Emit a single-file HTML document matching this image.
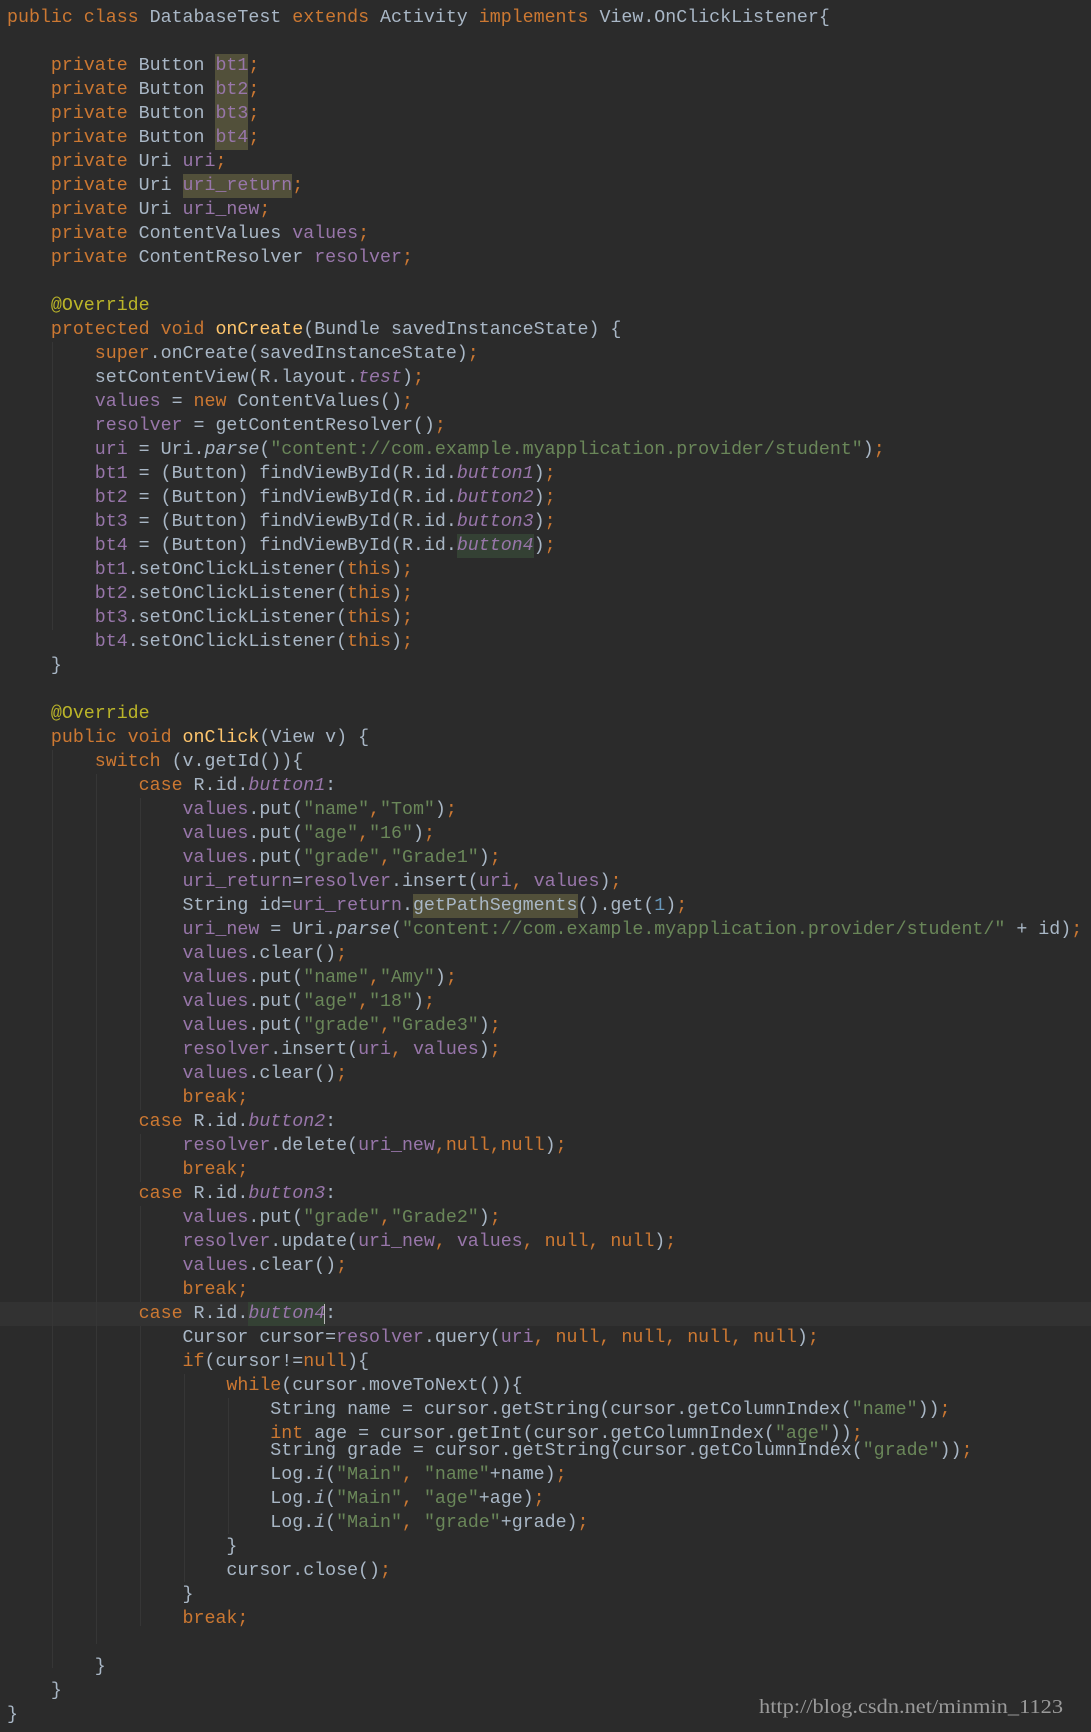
<!DOCTYPE html>
<html><head><meta charset="utf-8"><style>
html,body{margin:0;padding:0}
body{width:1091px;height:1732px;background:#2b2b2b;overflow:hidden;position:relative;font-family:"Liberation Mono","DejaVu Sans Mono",monospace;font-size:18.3px;color:#a9b7c6}
#code{position:absolute;left:7px;top:6px}
.l{height:24px;line-height:24px;white-space:pre}
.k{color:#cc7832}.f{color:#9876aa}.s{color:#6a8759}.m{color:#ffc66d}.a{color:#bbb529}.n{color:#6897bb}
.i{font-style:italic}
.h{background:#52503a;display:inline-block;height:24px}
.g{background:#344134;display:inline-block;height:24px}
.cur{position:absolute;left:0;width:1091px;height:24px;background:#323232}
.gd{position:absolute;width:1px;background:#363636}
#wm{position:absolute;left:759px;top:1696px;font-family:"Liberation Serif",serif;font-size:20px;color:#9a9a9a;transform:scaleX(1.12);transform-origin:left top;white-space:nowrap}
</style></head><body>
<div class="cur" style="top:1302px"></div>
<div class="gd" style="left:52px;top:342px;height:288px"></div>
<div class="gd" style="left:52px;top:750px;height:918px"></div>
<div class="gd" style="left:96px;top:774px;height:870px"></div>
<div class="gd" style="left:140px;top:798px;height:312px"></div>
<div class="gd" style="left:140px;top:1134px;height:48px"></div>
<div class="gd" style="left:140px;top:1206px;height:96px"></div>
<div class="gd" style="left:140px;top:1326px;height:300px"></div>
<div class="gd" style="left:184px;top:1374px;height:208px"></div>
<div class="gd" style="left:228px;top:1398px;height:136px"></div>
<div id="code">
<div class="l"><span class="k">public class </span>DatabaseTest <span class="k">extends </span>Activity <span class="k">implements </span>View.OnClickListener{</div>
<div class="l"> </div>
<div class="l">    <span class="k">private </span>Button <span class="h"><span class="f">bt1</span></span><span class="k">;</span></div>
<div class="l">    <span class="k">private </span>Button <span class="h"><span class="f">bt2</span></span><span class="k">;</span></div>
<div class="l">    <span class="k">private </span>Button <span class="h"><span class="f">bt3</span></span><span class="k">;</span></div>
<div class="l">    <span class="k">private </span>Button <span class="h"><span class="f">bt4</span></span><span class="k">;</span></div>
<div class="l">    <span class="k">private </span>Uri <span class="f">uri</span><span class="k">;</span></div>
<div class="l">    <span class="k">private </span>Uri <span class="h"><span class="f">uri_return</span></span><span class="k">;</span></div>
<div class="l">    <span class="k">private </span>Uri <span class="f">uri_new</span><span class="k">;</span></div>
<div class="l">    <span class="k">private </span>ContentValues <span class="f">values</span><span class="k">;</span></div>
<div class="l">    <span class="k">private </span>ContentResolver <span class="f">resolver</span><span class="k">;</span></div>
<div class="l"> </div>
<div class="l">    <span class="a">@Override</span></div>
<div class="l">    <span class="k">protected void </span><span class="m">onCreate</span>(Bundle savedInstanceState) {</div>
<div class="l">        <span class="k">super</span>.onCreate(savedInstanceState)<span class="k">;</span></div>
<div class="l">        setContentView(R.layout.<span class="f i">test</span>)<span class="k">;</span></div>
<div class="l">        <span class="f">values </span>= <span class="k">new </span>ContentValues()<span class="k">;</span></div>
<div class="l">        <span class="f">resolver </span>= getContentResolver()<span class="k">;</span></div>
<div class="l">        <span class="f">uri </span>= Uri.<span class="i">parse</span>(<span class="s">"content://com.example.myapplication.provider/student"</span>)<span class="k">;</span></div>
<div class="l">        <span class="f">bt1 </span>= (Button) findViewById(R.id.<span class="f i">button1</span>)<span class="k">;</span></div>
<div class="l">        <span class="f">bt2 </span>= (Button) findViewById(R.id.<span class="f i">button2</span>)<span class="k">;</span></div>
<div class="l">        <span class="f">bt3 </span>= (Button) findViewById(R.id.<span class="f i">button3</span>)<span class="k">;</span></div>
<div class="l">        <span class="f">bt4 </span>= (Button) findViewById(R.id.<span class="g"><span class="f i">button4</span></span>)<span class="k">;</span></div>
<div class="l">        <span class="f">bt1</span>.setOnClickListener(<span class="k">this</span>)<span class="k">;</span></div>
<div class="l">        <span class="f">bt2</span>.setOnClickListener(<span class="k">this</span>)<span class="k">;</span></div>
<div class="l">        <span class="f">bt3</span>.setOnClickListener(<span class="k">this</span>)<span class="k">;</span></div>
<div class="l">        <span class="f">bt4</span>.setOnClickListener(<span class="k">this</span>)<span class="k">;</span></div>
<div class="l">    }</div>
<div class="l"> </div>
<div class="l">    <span class="a">@Override</span></div>
<div class="l">    <span class="k">public void </span><span class="m">onClick</span>(View v) {</div>
<div class="l">        <span class="k">switch </span>(v.getId()){</div>
<div class="l">            <span class="k">case </span>R.id.<span class="f i">button1</span>:</div>
<div class="l">                <span class="f">values</span>.put(<span class="s">"name"</span><span class="k">,</span><span class="s">"Tom"</span>)<span class="k">;</span></div>
<div class="l">                <span class="f">values</span>.put(<span class="s">"age"</span><span class="k">,</span><span class="s">"16"</span>)<span class="k">;</span></div>
<div class="l">                <span class="f">values</span>.put(<span class="s">"grade"</span><span class="k">,</span><span class="s">"Grade1"</span>)<span class="k">;</span></div>
<div class="l">                <span class="f">uri_return</span>=<span class="f">resolver</span>.insert(<span class="f">uri</span><span class="k">, </span><span class="f">values</span>)<span class="k">;</span></div>
<div class="l">                String id=<span class="f">uri_return</span>.<span class="h">getPathSegments</span>().get(<span class="n">1</span>)<span class="k">;</span></div>
<div class="l">                <span class="f">uri_new </span>= Uri.<span class="i">parse</span>(<span class="s">"content://com.example.myapplication.provider/student/" </span>+ id)<span class="k">;</span></div>
<div class="l">                <span class="f">values</span>.clear()<span class="k">;</span></div>
<div class="l">                <span class="f">values</span>.put(<span class="s">"name"</span><span class="k">,</span><span class="s">"Amy"</span>)<span class="k">;</span></div>
<div class="l">                <span class="f">values</span>.put(<span class="s">"age"</span><span class="k">,</span><span class="s">"18"</span>)<span class="k">;</span></div>
<div class="l">                <span class="f">values</span>.put(<span class="s">"grade"</span><span class="k">,</span><span class="s">"Grade3"</span>)<span class="k">;</span></div>
<div class="l">                <span class="f">resolver</span>.insert(<span class="f">uri</span><span class="k">, </span><span class="f">values</span>)<span class="k">;</span></div>
<div class="l">                <span class="f">values</span>.clear()<span class="k">;</span></div>
<div class="l">                <span class="k">break;</span></div>
<div class="l">            <span class="k">case </span>R.id.<span class="f i">button2</span>:</div>
<div class="l">                <span class="f">resolver</span>.delete(<span class="f">uri_new</span><span class="k">,null,null</span>)<span class="k">;</span></div>
<div class="l">                <span class="k">break;</span></div>
<div class="l">            <span class="k">case </span>R.id.<span class="f i">button3</span>:</div>
<div class="l">                <span class="f">values</span>.put(<span class="s">"grade"</span><span class="k">,</span><span class="s">"Grade2"</span>)<span class="k">;</span></div>
<div class="l">                <span class="f">resolver</span>.update(<span class="f">uri_new</span><span class="k">, </span><span class="f">values</span><span class="k">, null, null</span>)<span class="k">;</span></div>
<div class="l">                <span class="f">values</span>.clear()<span class="k">;</span></div>
<div class="l">                <span class="k">break;</span></div>
<div class="l">            <span class="k">case </span>R.id.<span class="g"><span class="f i">button4</span></span><span style="border-left:1px solid #bbb;margin-left:-1px"></span>:</div>
<div class="l">                Cursor cursor=<span class="f">resolver</span>.query(<span class="f">uri</span><span class="k">, null, null, null, null</span>)<span class="k">;</span></div>
<div class="l">                <span class="k">if</span>(cursor!=<span class="k">null</span>){</div>
<div class="l">                    <span class="k">while</span>(cursor.moveToNext()){</div>
<div class="l">                        String name = cursor.getString(cursor.getColumnIndex(<span class="s">"name"</span>))<span class="k">;</span></div>
<div class="l">                        <span class="k">int </span>age = cursor.getInt(cursor.getColumnIndex(<span class="s">"age"</span>))<span class="k">;</span></div>
<div class="l" style="height:17px;line-height:10px">                        String grade = cursor.getString(cursor.getColumnIndex(<span class="s">"grade"</span>))<span class="k">;</span></div>
<div class="l">                        Log.<span class="i">i</span>(<span class="s">"Main"</span><span class="k">, </span><span class="s">"name"</span>+name)<span class="k">;</span></div>
<div class="l">                        Log.<span class="i">i</span>(<span class="s">"Main"</span><span class="k">, </span><span class="s">"age"</span>+age)<span class="k">;</span></div>
<div class="l">                        Log.<span class="i">i</span>(<span class="s">"Main"</span><span class="k">, </span><span class="s">"grade"</span>+grade)<span class="k">;</span></div>
<div class="l">                    }</div>
<div class="l">                    cursor.close()<span class="k">;</span></div>
<div class="l">                }</div>
<div class="l">                <span class="k">break;</span></div>
<div class="l"> </div>
<div class="l">        }</div>
<div class="l">    }</div>
<div class="l">}</div>
</div>
<div id="wm">http://blog.csdn.net/minmin_1123</div>
</body></html>
